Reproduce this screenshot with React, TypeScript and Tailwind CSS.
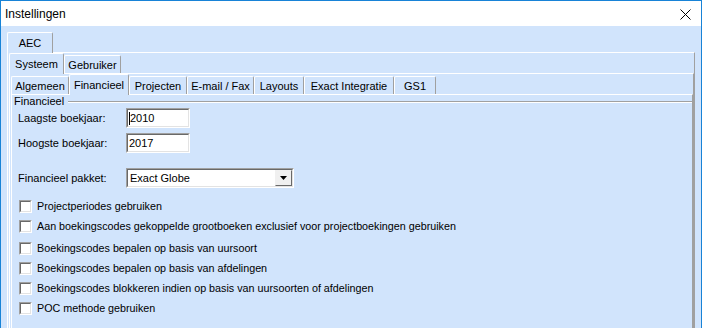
import type { ReactNode } from 'react';

type TabProps = { label: string; selected?: boolean; width: string };

function Tab({ label, selected, width }: TabProps) {
  if (selected) {
    return (
      <div
        className={`${width} relative z-10 -mb-px h-[21px] rounded-t-[2px] border-l border-t border-r border-white border-r-[#a0a0a0] bg-[#d1e4fc] flex items-center justify-center`}
      >
        {label}
      </div>
    );
  }
  return (
    <div
      className={`${width} h-[18px] rounded-t-[2px] border-l border-t border-r border-white border-r-[#a0a0a0] bg-[#d1e4fc] flex items-center justify-center pt-px`}
    >
      {label}
    </div>
  );
}

function TabPage({ children }: { children: ReactNode }) {
  return (
    <div className="flex-1 flex flex-col border-t border-l border-r border-white border-r-[#a0a0a0] pl-px">
      {children}
    </div>
  );
}

function Sunken({ className, children }: { className: string; children?: ReactNode }) {
  return (
    <div className={`${className} border border-t-[#a0a0a0] border-l-[#a0a0a0] border-r-white border-b-white`}>
      <div className="w-full h-full border border-t-[#696969] border-l-[#696969] border-r-[#e3e3e3] border-b-[#e3e3e3] bg-white flex items-center">
        {children}
      </div>
    </div>
  );
}

function CheckRow({ label, spacing }: { label: string; spacing: string }) {
  return (
    <div className={`${spacing} flex items-center h-[13px] pl-[6px]`}>
      <Sunken className="w-[13px] h-[13px]" />
      <span className="ml-[5px] leading-[13px] text-[10.75px]">{label}</span>
    </div>
  );
}

export default function App() {
  const thirdTabs = [
    { label: 'Algemeen', width: 'w-[58px]' },
    { label: 'Financieel', width: 'w-[60px]', selected: true },
    { label: 'Projecten', width: 'w-[58px]' },
    { label: 'E-mail / Fax', width: 'w-[67px]' },
    { label: 'Layouts', width: 'w-[50px]' },
    { label: 'Exact Integratie', width: 'w-[90px]' },
    { label: 'GS1', width: 'w-[42px]' },
  ];

  return (
    <div className="w-[702px] h-[328px] overflow-hidden flex flex-col border-x border-t border-[#1883d7] bg-[#d1e4fc] text-[11px] text-black font-['Liberation_Sans',Arial,sans-serif]">
      {/* Title bar */}
      <div className="h-[25px] shrink-0 bg-white flex items-center justify-between pl-[4px] pr-[10px]">
        <span className="text-[12px]">Instellingen</span>
        <svg width="11" height="11" viewBox="0 0 11 11" className="mt-px">
          <path d="M0.5 0.5 L10.5 10.5 M10.5 0.5 L0.5 10.5" stroke="#000" strokeWidth="1" fill="none" />
        </svg>
      </div>

      {/* Content */}
      <div className="flex-1 flex flex-col pt-[6px] px-[6px]">
        {/* AEC tabs */}
        <div className="h-[20px] shrink-0 flex items-end">
          <Tab label="AEC" width="w-[46px]" selected />
        </div>
        <TabPage>
          {/* Systeem / Gebruiker */}
          <div className="h-[20px] shrink-0 flex items-end">
            <Tab label="Systeem" width="w-[55px]" selected />
            <Tab label="Gebruiker" width="w-[57px]" />
          </div>
          <TabPage>
            <div className="h-[20px] shrink-0 flex items-end">
              {thirdTabs.map((t) => (
                <Tab key={t.label} label={t.label} width={t.width} selected={t.selected} />
              ))}
            </div>
            <TabPage>
              {/* Group box header */}
              <div className="h-[13px] flex items-start">
                <span className="pl-px leading-[13px]">Financieel</span>
                <div className="flex-1 mt-[6px] ml-[4px] h-[2px] border-t border-b border-t-[#a0a0a0] border-b-white" />
              </div>

              <div className="flex flex-col">
                <div className="flex items-center h-[20px]">
                  <span className="w-[113px] pl-[5px]">Laagste boekjaar:</span>
                  <Sunken className="w-[64px] h-[20px]">
                    <span className="w-px h-[13px] bg-black ml-px" />
                    <span className="ml-0">2010</span>
                  </Sunken>
                </div>
                <div className="flex items-center h-[20px] mt-[5px]">
                  <span className="w-[113px] pl-[5px]">Hoogste boekjaar:</span>
                  <Sunken className="w-[64px] h-[20px]">
                    <span className="ml-px">2017</span>
                  </Sunken>
                </div>
                <div className="flex items-center h-[20px] mt-[15px]">
                  <span className="w-[113px] pl-[5px]">Financieel pakket:</span>
                  <Sunken className="w-[168px] h-[20px]">
                    <span className="flex-1 ml-[2px]">Exact Globe</span>
                    <div className="w-[17px] h-full border border-t-[#f0f0f0] border-l-[#f0f0f0] border-r-[#696969] border-b-[#696969] bg-[#f0f0f0] flex items-center justify-center">
                      <svg width="7" height="4" viewBox="0 0 7 4">
                        <path d="M0 0 H7 L3.5 4 Z" fill="#000" />
                      </svg>
                    </div>
                  </Sunken>
                </div>

                <CheckRow spacing="mt-[12px]" label="Projectperiodes gebruiken" />
                <CheckRow
                  spacing="mt-[7px]"
                  label="Aan boekingscodes gekoppelde grootboeken exclusief voor projectboekingen gebruiken"
                />
                <CheckRow spacing="mt-[9px]" label="Boekingscodes bepalen op basis van uursoort" />
                <CheckRow spacing="mt-[7px]" label="Boekingscodes bepalen op basis van afdelingen" />
                <CheckRow
                  spacing="mt-[7px]"
                  label="Boekingscodes blokkeren indien op basis van uursoorten of afdelingen"
                />
                <CheckRow spacing="mt-[7px]" label="POC methode gebruiken" />
              </div>
            </TabPage>
          </TabPage>
        </TabPage>
      </div>
    </div>
  );
}
